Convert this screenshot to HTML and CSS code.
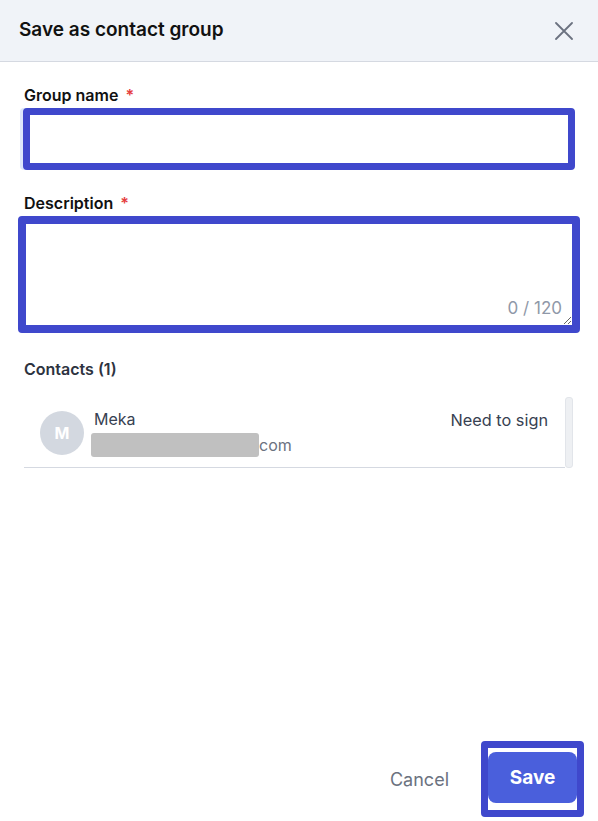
FILE: index.html
```html
<!DOCTYPE html>
<html lang="en">
<head>
    <meta charset="UTF-8">
    <meta name="viewport" content="width=device-width, initial-scale=1.0">
    <title>Save as contact group</title>
    <link rel="stylesheet" href="styles.css">
</head>
<body>
    <div class="dialog">
        <div class="dialog-header">
            <h2>Save as contact group</h2>
            <button class="close-btn" aria-label="Close">
                <svg width="18" height="18" viewBox="0 0 18 18">
                    <path d="M1 1 L17 17 M17 1 L1 17" stroke="#6b7280" stroke-width="1.8" fill="none" stroke-linecap="round"/>
                </svg>
            </button>
        </div>

        <div class="dialog-body">
            <label class="field-label" for="groupName">Group name <span class="req">*</span></label>
            <input type="text" id="groupName" class="name-input">

            <label class="field-label" for="description">Description <span class="req">*</span></label>
            <div class="desc-wrap">
                <textarea id="description" class="desc-input"></textarea>
                <span class="counter">0 / 120</span>
            </div>

            <div class="section-title">Contacts (1)</div>
            <div class="contact-list">
                <div class="contact-row">
                    <div class="avatar">M</div>
                    <div class="contact-info">
                        <div class="contact-name">Meka</div>
                        <div class="contact-email"><span class="redacted"></span>com</div>
                    </div>
                    <div class="contact-status">Need to sign</div>
                </div>
                <div class="scrollbar"></div>
            </div>
        </div>

        <div class="dialog-footer">
            <button class="cancel-btn">Cancel</button>
            <div class="save-frame">
                <button class="save-btn">Save</button>
            </div>
        </div>
    </div>
</body>
</html>
```

FILE: styles.css
```css
* {
    box-sizing: border-box;
}
body {
    margin: 0;
    font-family: Inter, "Liberation Sans", Arial, sans-serif;
    background: #fff;
    color: #111827;
}
.dialog {
    display: flex;
    flex-direction: column;
    min-height: 100vh;
}
.dialog-header {
    height: 62px;
    background-color: #f0f3f8;
    border-bottom: 1px solid #d5d9e1;
    display: flex;
    align-items: center;
    justify-content: space-between;
    padding: 0 25px 0 19px;
}
.dialog-header h2 {
    margin: 0;
    font-size: 19px;
    font-weight: 600;
    color: #111;
    padding-bottom: 2px;
}
.close-btn {
    background: none;
    border: none;
    padding: 0;
    width: 18px;
    height: 18px;
    cursor: pointer;
}
.dialog-body {
    padding: 0 24px;
    display: flex;
    flex-direction: column;
}
.field-label {
    font-size: 16px;
    line-height: 20px;
    font-weight: 600;
    color: #111;
    margin-top: 23px;
    margin-bottom: 3px;
}
.req {
    color: #e53e3e;
    margin-left: 3px;
}
.name-input {
    display: block;
    width: 552px;
    height: 62px;
    margin: 0 -1px;
    border: 7px solid #3f48cc;
    border-radius: 4px;
    box-shadow: -3px 0 0 #dde7fb;
    outline: none;
    font-family: inherit;
    font-size: 16px;
}
.desc-wrap {
    position: relative;
    width: 562px;
    margin: 0 -6px;
}
.desc-input {
    display: block;
    width: 562px;
    height: 117px;
    border: 8px solid #3f48cc;
    border-radius: 4px;
    outline: none;
    resize: both;
    font-family: inherit;
    font-size: 16px;
}
.counter {
    position: absolute;
    right: 18px;
    bottom: 15px;
    font-size: 17px;
    color: #8f98a8;
}
.section-title {
    font-size: 16px;
    line-height: 20px;
    font-weight: 600;
    color: #2d3340;
    margin-top: 26px;
}
.contact-list {
    margin-top: 18px;
    display: flex;
    align-items: stretch;
}
.contact-row {
    flex: 1;
    display: flex;
    align-items: center;
    height: 71px;
    padding: 0 17px 0 16px;
    border-bottom: 1px solid #d5d9e1;
}
.avatar {
    width: 44px;
    height: 44px;
    border-radius: 50%;
    background-color: #d3d8e0;
    color: #fff;
    font-weight: 700;
    font-size: 16px;
    display: flex;
    align-items: center;
    justify-content: center;
    margin-right: 10px;
    margin-top: 1px;
}
.contact-info {
    flex: 1;
    display: flex;
    flex-direction: column;
    gap: 4px;
    margin-top: 2px;
}
.contact-name {
    font-size: 16px;
    line-height: 20px;
    color: #374151;
}
.contact-email {
    font-size: 16px;
    line-height: 20px;
    color: #6b7280;
    display: flex;
    align-items: center;
    margin-left: -3px;
}
.redacted {
    display: inline-block;
    width: 168px;
    height: 24px;
    background-color: #c0c0c0;
    border-radius: 3px;
}
.contact-status {
    font-size: 16.3px;
    color: #374151;
    align-self: flex-start;
    margin-top: 13px;
}
.scrollbar {
    width: 8px;
    height: 71px;
    border: 1px solid #e2e5ea;
    border-radius: 3px;
    background-color: #eef0f3;
    margin-right: 1px;
}
.dialog-footer {
    margin-top: auto;
    display: flex;
    justify-content: flex-end;
    align-items: center;
    gap: 32px;
    padding: 0 14px 4px 0;
}
.cancel-btn {
    background: none;
    border: none;
    font-family: inherit;
    font-size: 18px;
    color: #6b7280;
    padding: 0;
    cursor: pointer;
    margin-top: 1px;
}
.save-frame {
    border: 7px solid #3f48cc;
    border-radius: 4px;
    padding: 4px 0 7px 0;
    display: flex;
}
.save-btn {
    width: 89px;
    height: 51px;
    background-color: #4a5fdc;
    color: #fff;
    border: none;
    border-radius: 8px;
    font-family: inherit;
    font-size: 19px;
    font-weight: 700;
    cursor: pointer;
}
```
